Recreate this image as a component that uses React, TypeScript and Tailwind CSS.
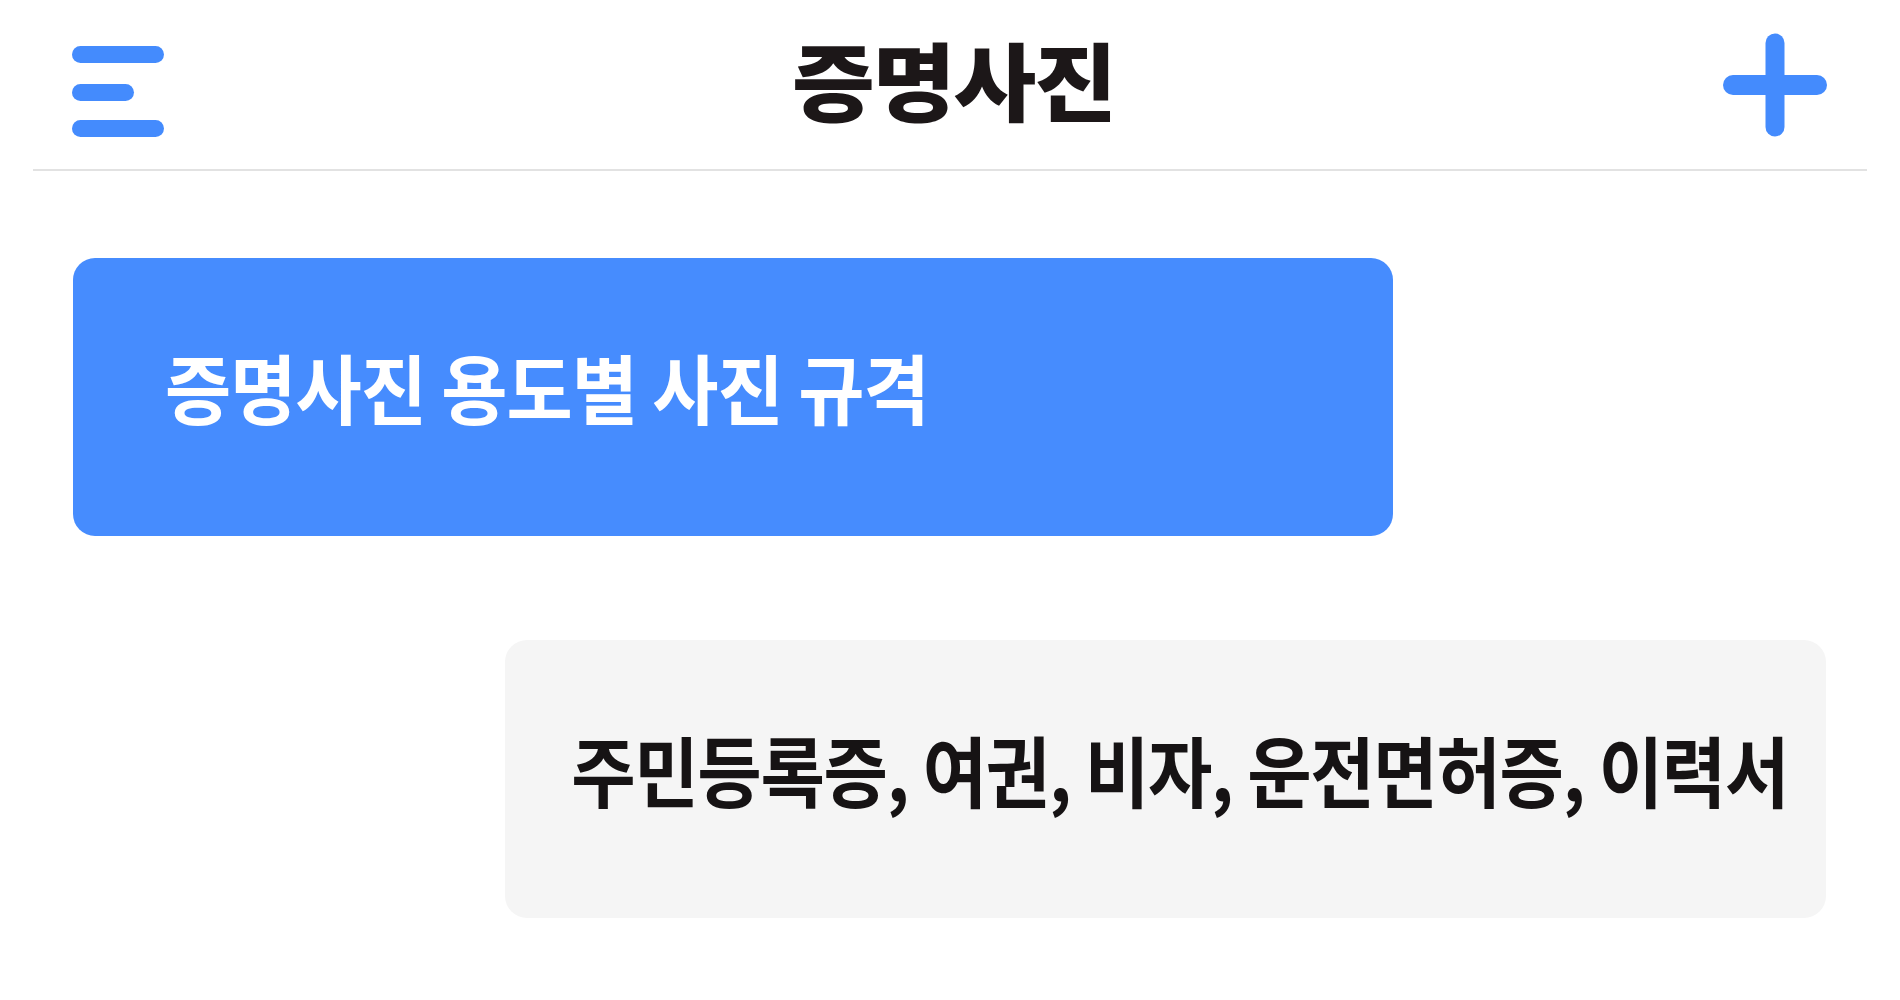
import React from "react";

const FONT = { fontFamily: '"Noto Sans CJK KR", "Noto Sans", sans-serif' };

function Hamburger() {
  return (
    <svg width="92" height="91" viewBox="0 0 92 91" className="mt-[13px]">
      <rect x="0" y="0" width="92" height="17" rx="8.5" fill="#448bfd" />
      <rect x="0" y="38" width="62" height="17" rx="8.5" fill="#448bfd" />
      <rect x="0" y="74" width="92" height="17" rx="8.5" fill="#448bfd" />
    </svg>
  );
}

function Plus() {
  return (
    <svg width="104" height="104" viewBox="0 0 104 104">
      <line x1="10" y1="52" x2="94" y2="52" stroke="#448bfd" strokeWidth="20" strokeLinecap="round" />
      <line x1="52" y1="10" x2="52" y2="94" stroke="#448bfd" strokeWidth="19" strokeLinecap="round" />
    </svg>
  );
}

export default function App() {
  return (
    <div className="w-full h-screen bg-white overflow-hidden" style={FONT}>
      <header className="mx-[33px] h-[171px] border-b-2 border-[#e2e2e2] grid grid-cols-[1fr_auto_1fr] items-center pl-[39px] pr-[40px]">
        <div className="flex items-center">
          <Hamburger />
        </div>
        <h1 className="text-[90px] font-black text-[#1c1718] leading-none tracking-[-2px] pl-[8px] mb-[14px] scale-y-[0.95]">
          증명사진
        </h1>
        <div className="flex justify-end items-center">
          <Plus />
        </div>
      </header>
      <main className="flex flex-col pt-[87px] gap-[104px]">
        <div className="ml-[73px] w-[1320px] h-[278px] rounded-[22px] bg-[#468cfe] flex items-center pl-[92px] pb-[22px]">
          <span className="inline-block text-white font-bold text-[72px] leading-none tracking-[-1px] scale-y-[1.05]">
            증명사진 용도별 사진 규격
          </span>
        </div>
        <div className="ml-[505px] w-[1321px] h-[278px] rounded-[22px] bg-[#f5f5f5] flex items-center justify-end pr-[38px] pb-[20px]">
          <span className="inline-block text-[#161314] font-bold text-[70px] leading-none tracking-[-1.3px] scale-y-[1.1] origin-right">
            주민등록증, 여권, 비자, 운전면허증, 이력서
          </span>
        </div>
      </main>
    </div>
  );
}
